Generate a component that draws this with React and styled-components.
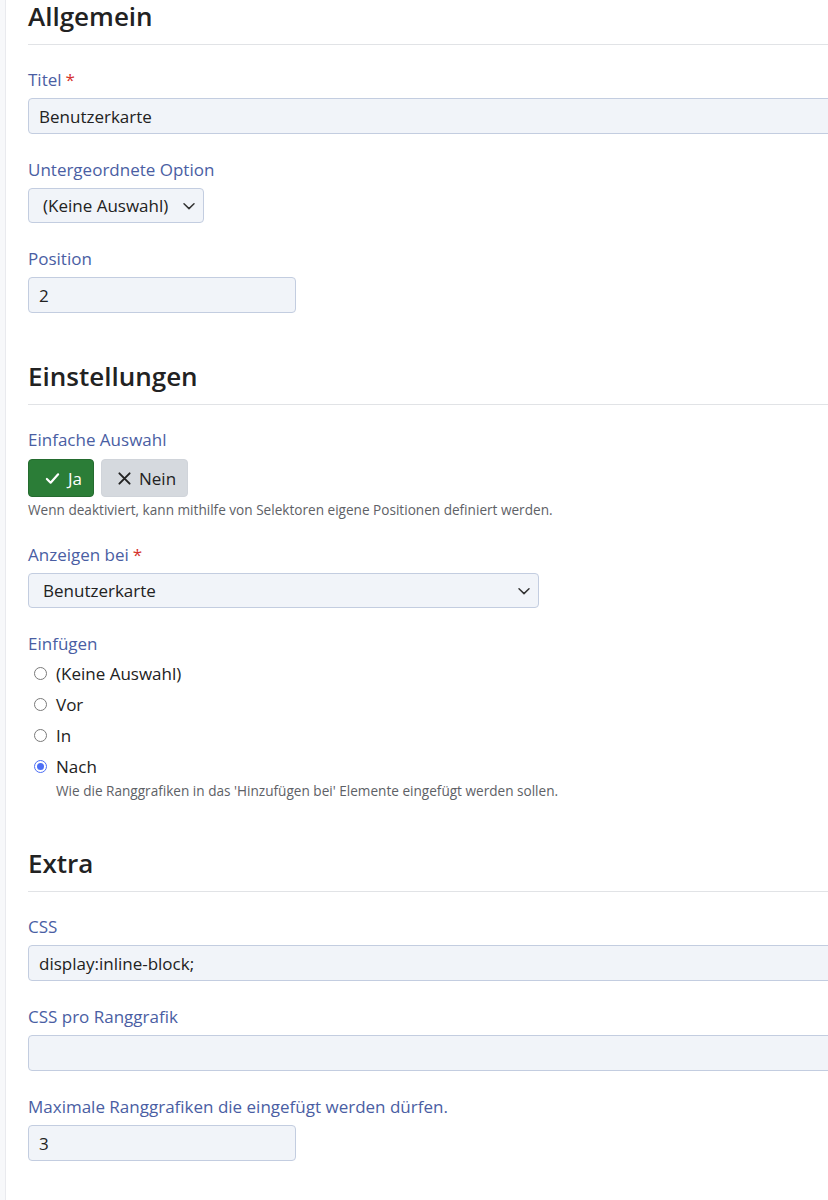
import React from "react";
import styled, { createGlobalStyle } from "styled-components";

const Global = createGlobalStyle`
  html, body { margin: 0; padding: 0; background: #fff; overflow: hidden; }
  body { font-family: "Open Sans", "Noto Sans", Arial, sans-serif; color: #222; }
  * { box-sizing: border-box; }
`;

const Shell = styled.div`
  display: flex;
  min-height: 1200px;
  width: 960px;
`;

const SideEdge = styled.div`
  width: 6px;
  flex: none;
  background: #f7f8fa;
  border-right: 1px solid #e9eaee;
`;

const Main = styled.main`
  flex: 1;
  padding: 0 0 40px 22px;
`;

const Section = styled.section`
  margin-bottom: ${(p) => p.$gap || 47}px;
`;

const Heading = styled.h2`
  margin: 0 0 23px;
  font-size: 26px;
  line-height: 32px;
  font-weight: 600;
  color: #222;
  padding-bottom: 12px;
  border-bottom: 1px solid #e1e3e6;
`;

const Field = styled.div`
  margin-bottom: ${(p) => (p.$last ? 0 : 24)}px;
`;

const Label = styled.label`
  display: block;
  font-size: 17px;
  line-height: 24px;
  color: #4a5ea3;
  margin-bottom: ${(p) => p.$mb ?? 6}px;
`;

const Req = styled.span`
  color: #d5322c;
  margin-left: 4px;
`;

const TextInput = styled.input`
  display: block;
  width: ${(p) => p.$w || "100%"};
  height: 36px;
  padding: 0 10px;
  font: inherit;
  font-size: 17px;
  color: #222;
  background: #f1f4f9;
  border: 1px solid #c3cde0;
  border-radius: 4px;
  outline: none;
`;

const SelectBox = styled.div`
  display: ${(p) => (p.$w ? "flex" : "inline-flex")};
  align-items: center;
  justify-content: space-between;
  gap: 14px;
  width: ${(p) => p.$w || "auto"};
  height: 35px;
  padding: 0 7px 0 14px;
  font-size: 17px;
  color: #222;
  background: #f1f4f9;
  border: 1px solid #c3cde0;
  border-radius: 4px;
`;

const Chevron = () => (
  <svg width="14" height="14" viewBox="0 0 14 14" fill="none">
    <path d="M2 4.8 L7 9.6 L12 4.8" stroke="#333" strokeWidth="1.5" strokeLinecap="round" strokeLinejoin="round" />
  </svg>
);

const Toggle = styled.div`
  display: flex;
  gap: 7px;
  margin-bottom: 4px;
`;

const ToggleButton = styled.button`
  display: inline-flex;
  align-items: center;
  gap: 8px;
  height: 38px;
  padding: 0 11px 0 16px;
  font: inherit;
  font-size: 17px;
  border-radius: 4px;
  color: ${(p) => (p.$active ? "#fff" : "#222")};
  background: ${(p) => (p.$active ? "#2b7d37" : "#d5d9de")};
  border: 1px solid ${(p) => (p.$active ? "#246b2f" : "#d0d4da")};
`;

const Help = styled.div`
  font-size: 13.6px;
  line-height: 18px;
  color: #5e6166;
  padding-left: ${(p) => p.$indent || 0}px;
`;

const RadioList = styled.div`
  display: flex;
  flex-direction: column;
  margin-top: 2px;
`;

const RadioRow = styled.label`
  display: flex;
  align-items: center;
  gap: 9px;
  height: 31px;
  padding-left: 6px;
  font-size: 17px;
  color: #222;
`;

const Radio = styled.span`
  width: 13px;
  height: 13px;
  border-radius: 50%;
  flex: none;
  border: 1px solid ${(p) => (p.$checked ? "#4c6ef5" : "#7a7a7a")};
  background: #fff;
  display: grid;
  place-items: center;
  &::after {
    content: "";
    width: 7px;
    height: 7px;
    border-radius: 50%;
    background: ${(p) => (p.$checked ? "#4c6ef5" : "transparent")};
  }
`;

const CheckIcon = () => (
  <svg width="15" height="15" viewBox="0 0 16 16" fill="none">
    <path d="M2 8.5 L6 12.5 L14 3.5" stroke="#fff" strokeWidth="2.3" strokeLinecap="round" strokeLinejoin="round" />
  </svg>
);

const CrossIcon = () => (
  <svg width="13" height="13" viewBox="0 0 14 14" fill="none">
    <path d="M1.5 1.5 L12.5 12.5 M12.5 1.5 L1.5 12.5" stroke="#222" strokeWidth="2.1" strokeLinecap="round" />
  </svg>
);

const insertOptions = ["(Keine Auswahl)", "Vor", "In", "Nach"];

export default function App() {
  return (
    <>
      <Global />
      <Shell>
        <SideEdge />
        <Main>
          <Section>
            <Heading>Allgemein</Heading>
            <Field>
              <Label>
                Titel<Req>*</Req>
              </Label>
              <TextInput defaultValue="Benutzerkarte" />
            </Field>
            <Field>
              <Label>Untergeordnete Option</Label>
              <SelectBox>
                <span>(Keine Auswahl)</span>
                <Chevron />
              </SelectBox>
            </Field>
            <Field $last>
              <Label>Position</Label>
              <TextInput $w="268px" defaultValue="2" />
            </Field>
          </Section>

          <Section $gap={47}>
            <Heading>Einstellungen</Heading>
            <Field>
              <Label $mb={7}>Einfache Auswahl</Label>
              <Toggle>
                <ToggleButton $active>
                  <CheckIcon />
                  Ja
                </ToggleButton>
                <ToggleButton>
                  <CrossIcon />
                  Nein
                </ToggleButton>
              </Toggle>
              <Help>Wenn deaktiviert, kann mithilfe von Selektoren eigene Positionen definiert werden.</Help>
            </Field>
            <Field>
              <Label>
                Anzeigen bei<Req>*</Req>
              </Label>
              <SelectBox $w="511px">
                <span>Benutzerkarte</span>
                <Chevron />
              </SelectBox>
            </Field>
            <Field $last>
              <Label $mb={0}>Einfügen</Label>
              <RadioList>
                {insertOptions.map((o) => (
                  <RadioRow key={o}>
                    <Radio $checked={o === "Nach"} />
                    {o}
                  </RadioRow>
                ))}
              </RadioList>
              <Help $indent={28}>Wie die Ranggrafiken in das 'Hinzufügen bei' Elemente eingefügt werden sollen.</Help>
            </Field>
          </Section>

          <Section>
            <Heading>Extra</Heading>
            <Field>
              <Label>CSS</Label>
              <TextInput defaultValue="display:inline-block;" />
            </Field>
            <Field>
              <Label>CSS pro Ranggrafik</Label>
              <TextInput defaultValue="" />
            </Field>
            <Field $last>
              <Label>Maximale Ranggrafiken die eingefügt werden dürfen.</Label>
              <TextInput $w="268px" defaultValue="3" />
            </Field>
          </Section>
        </Main>
      </Shell>
    </>
  );
}
